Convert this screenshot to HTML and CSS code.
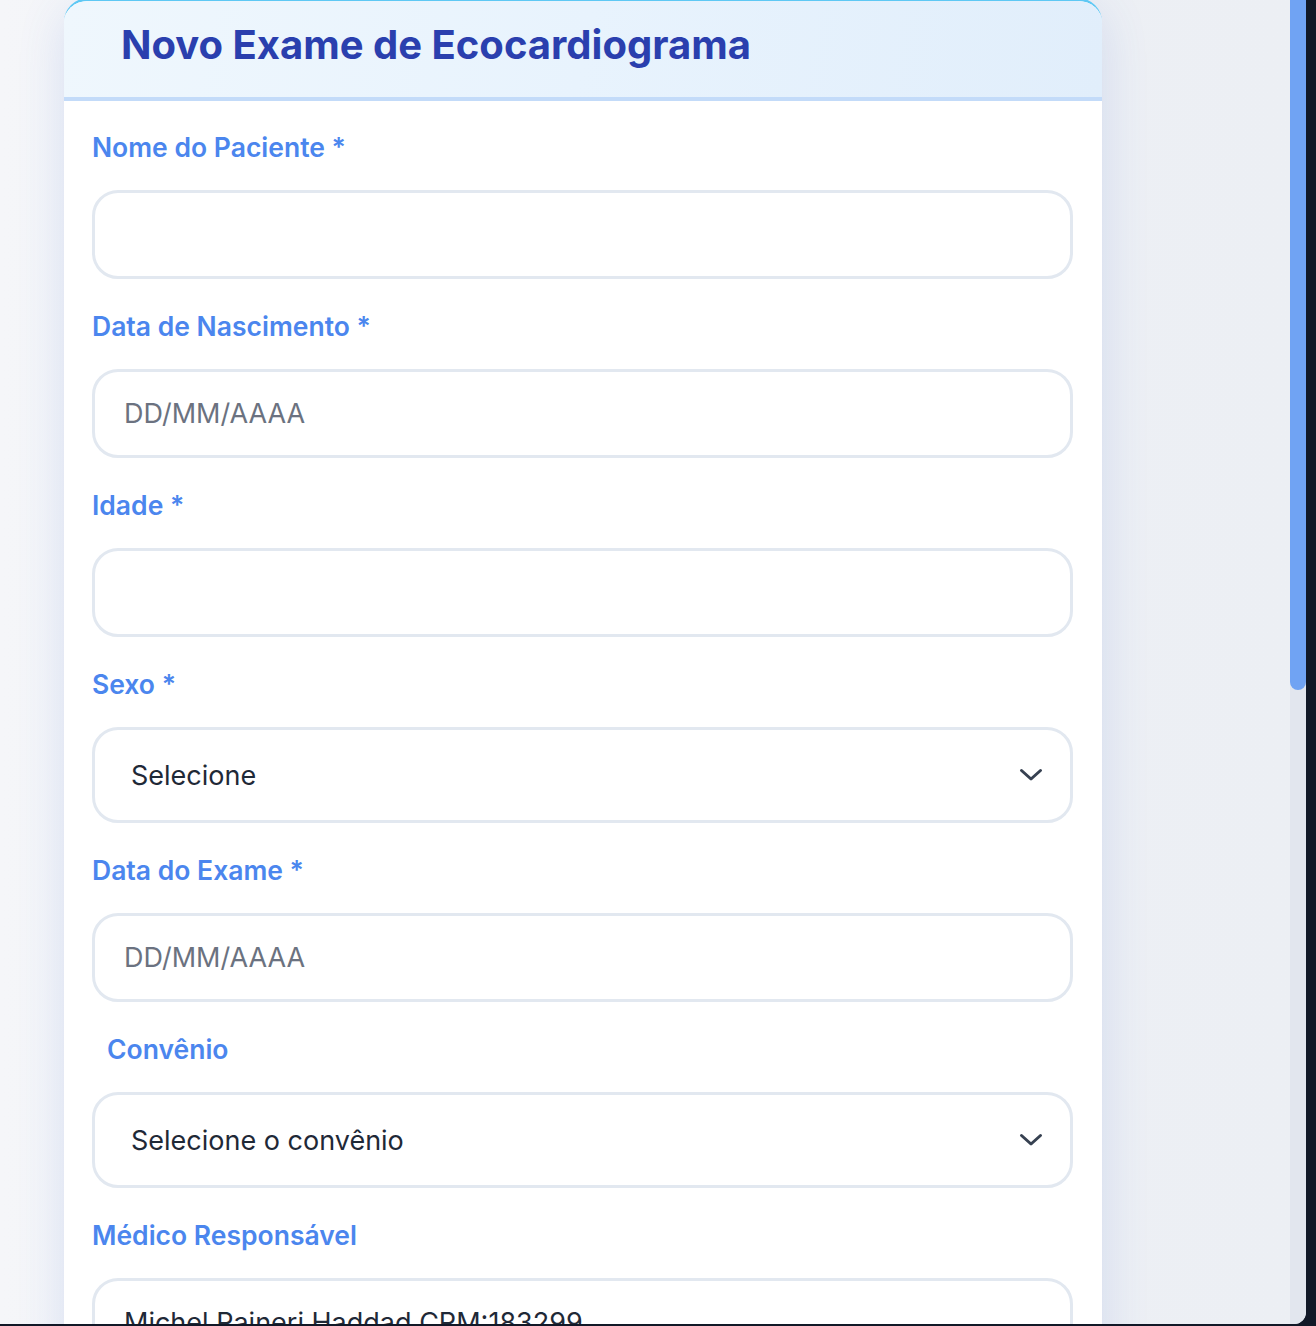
FILE: index.html
```html
<!DOCTYPE html>
<html lang="pt-BR">
<head>
<meta charset="utf-8">
<title>Novo Exame de Ecocardiograma</title>
<link rel="stylesheet" href="styles.css">
</head>
<body>
<div class="shell">
  <main class="page">
    <section class="card">
      <header class="card-header">
        <h1 class="title">Novo Exame de Ecocardiograma</h1>
      </header>
      <form class="card-body">
        <div class="field">
          <label class="label">Nome do Paciente *</label>
          <input class="control" type="text">
        </div>
        <div class="field">
          <label class="label">Data de Nascimento *</label>
          <input class="control" type="text" placeholder="DD/MM/AAAA">
        </div>
        <div class="field">
          <label class="label">Idade *</label>
          <input class="control" type="text">
        </div>
        <div class="field">
          <label class="label">Sexo *</label>
          <div class="select">
            <span class="select-value">Selecione</span>
            <svg class="chevron" width="24" height="14" viewBox="0 0 24 14"><path d="M2.5 2.5 L12 11 L21.5 2.5" fill="none" stroke="#374151" stroke-width="3" stroke-linecap="round" stroke-linejoin="round"/></svg>
          </div>
        </div>
        <div class="field">
          <label class="label">Data do Exame *</label>
          <input class="control" type="text" placeholder="DD/MM/AAAA">
        </div>
        <div class="field">
          <label class="label label-indent">Convênio</label>
          <div class="select">
            <span class="select-value">Selecione o convênio</span>
            <svg class="chevron" width="24" height="14" viewBox="0 0 24 14"><path d="M2.5 2.5 L12 11 L21.5 2.5" fill="none" stroke="#374151" stroke-width="3" stroke-linecap="round" stroke-linejoin="round"/></svg>
          </div>
        </div>
        <div class="field">
          <label class="label">Médico Responsável</label>
          <input class="control" type="text" value="Michel Raineri Haddad CRM:183299">
        </div>
        <div class="field">
          <label class="label">Peso (kg)</label>
          <input class="control" type="text">
        </div>
        <div class="field">
          <label class="label">Altura (cm)</label>
          <input class="control" type="text">
        </div>
      </form>
    </section>
  </main>
  <div class="scrollbar">
    <div class="scrollbar-thumb"></div>
  </div>
</div>
</body>
</html>
```
FILE: styles.css
```css
html, body {
  margin: 0;
  padding: 0;
  background: #111827;
  overflow: hidden;
}
body {
  width: 1316px;
  height: 1326px;
  font-family: Inter, "Noto Sans", sans-serif;
}
.shell {
  width: 1306px;
  height: 1324px;
  display: flex;
  overflow: hidden;
  border-bottom-right-radius: 12px;
  background: linear-gradient(90deg, #f5f6f9 0%, #eef0f5 40%, #eceff4 100%);
}
.page {
  flex: 1;
  min-width: 0;
  height: 100%;
  overflow: hidden;
  padding-left: 64px;
}
.scrollbar {
  width: 16px;
  flex: none;
  background: #e2e6ee;
}
.scrollbar-thumb {
  height: 690px;
  background: #70a3f3;
  border-radius: 0 0 8px 8px;
}
.card {
  width: 1038px;
  margin-top: -2px;
  background: #ffffff;
  border-top: 3px solid #5ec8f4;
  border-radius: 24px 24px 0 0;
  overflow: hidden;
  box-shadow: 0 12px 48px rgba(70, 110, 210, 0.16);
}
.card-header {
  background: linear-gradient(100deg, #eff7fd 0%, #e8f3fd 50%, #e1eefb 100%);
  border-bottom: 4px solid #c3dbf9;
  padding: 20px 56px 28px 57px;
}
.title {
  margin: 0;
  font-size: 40px;
  line-height: 48px;
  font-weight: 700;
  color: #2a3fae;
}
.card-body {
  padding: 29px 29px 40px 28px;
}
.field {
  margin-bottom: 30px;
}
.label {
  display: block;
  font-size: 26.5px;
  line-height: 34px;
  font-weight: 600;
  color: #4b86ee;
  margin-bottom: 26px;
}
.label-indent {
  padding-left: 15px;
}
.control {
  display: block;
  box-sizing: border-box;
  width: 100%;
  height: 89px;
  border: 3px solid #e2e8f0;
  border-radius: 26px;
  padding: 0 29px;
  font-family: Inter, "Noto Sans", sans-serif;
  font-size: 27px;
  color: #1f2937;
  background: #ffffff;
  outline: none;
}
.control::placeholder {
  color: #6b7280;
}
.select {
  box-sizing: border-box;
  height: 96px;
  border: 3px solid #e2e8f0;
  border-radius: 26px;
  padding: 0 27px 0 36px;
  display: flex;
  align-items: center;
  justify-content: space-between;
  font-size: 27px;
  color: #1f2937;
}
.chevron {
  display: block;
}
```
